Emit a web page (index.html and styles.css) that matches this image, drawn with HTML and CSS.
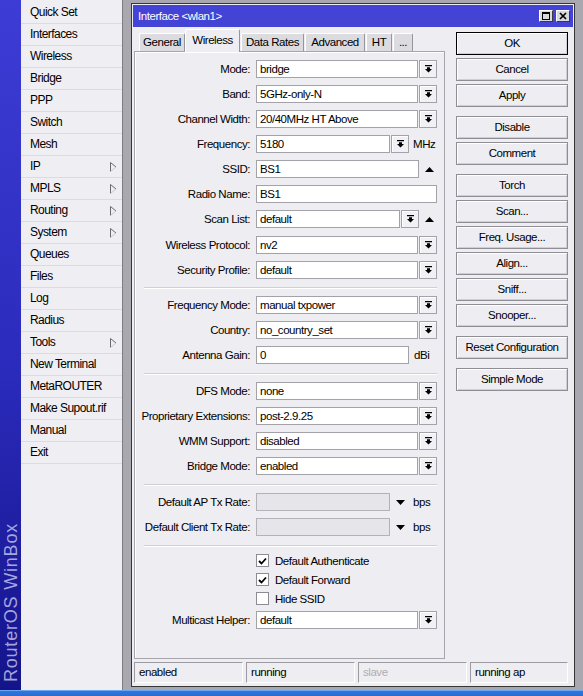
FILE: index.html
```html
<!DOCTYPE html>
<html>
<head>
<meta charset="utf-8">
<title>WinBox - Interface wlan1</title>
<link rel="stylesheet" href="styles.css">
</head>
<body>
<div class="screen">
  <div class="main">
    <div class="brand"><span class="brand-text">RouterOS WinBox</span></div>
    <ul class="menu">
      <li class="menu-item">Quick Set</li>
      <li class="menu-item">Interfaces</li>
      <li class="menu-item">Wireless</li>
      <li class="menu-item">Bridge</li>
      <li class="menu-item">PPP</li>
      <li class="menu-item">Switch</li>
      <li class="menu-item">Mesh</li>
      <li class="menu-item">IP<svg class="sub-arrow" width="7" height="10" viewBox="0 0 7 10"><path d="M0.5 0.5V9.5M0.5 0.5L6 5" stroke="#6a6a70" fill="none"/><path d="M6 5L0.5 9.5" stroke="#c9c8ce" fill="none"/></svg></li>
      <li class="menu-item">MPLS<svg class="sub-arrow" width="7" height="10" viewBox="0 0 7 10"><path d="M0.5 0.5V9.5M0.5 0.5L6 5" stroke="#6a6a70" fill="none"/><path d="M6 5L0.5 9.5" stroke="#c9c8ce" fill="none"/></svg></li>
      <li class="menu-item">Routing<svg class="sub-arrow" width="7" height="10" viewBox="0 0 7 10"><path d="M0.5 0.5V9.5M0.5 0.5L6 5" stroke="#6a6a70" fill="none"/><path d="M6 5L0.5 9.5" stroke="#c9c8ce" fill="none"/></svg></li>
      <li class="menu-item">System<svg class="sub-arrow" width="7" height="10" viewBox="0 0 7 10"><path d="M0.5 0.5V9.5M0.5 0.5L6 5" stroke="#6a6a70" fill="none"/><path d="M6 5L0.5 9.5" stroke="#c9c8ce" fill="none"/></svg></li>
      <li class="menu-item">Queues</li>
      <li class="menu-item">Files</li>
      <li class="menu-item">Log</li>
      <li class="menu-item">Radius</li>
      <li class="menu-item">Tools<svg class="sub-arrow" width="7" height="10" viewBox="0 0 7 10"><path d="M0.5 0.5V9.5M0.5 0.5L6 5" stroke="#6a6a70" fill="none"/><path d="M6 5L0.5 9.5" stroke="#c9c8ce" fill="none"/></svg></li>
      <li class="menu-item">New Terminal</li>
      <li class="menu-item">MetaROUTER</li>
      <li class="menu-item">Make Supout.rif</li>
      <li class="menu-item">Manual</li>
      <li class="menu-item">Exit</li>
    </ul>
    <div class="desk">
      <div class="window">
        <div class="titlebar">
          <span class="title">Interface &lt;wlan1&gt;</span>
          <div class="tb-btns">
            <span class="tb-btn"><svg width="8" height="8" viewBox="0 0 8 8"><rect x="0.5" y="0.5" width="7" height="7" fill="none" stroke="#000"/><rect x="0" y="0" width="8" height="2" fill="#000"/></svg></span>
            <span class="tb-btn"><svg width="8" height="8" viewBox="0 0 8 8"><path d="M1 1L7 7M7 1L1 7" stroke="#000" stroke-width="1.7"/></svg></span>
          </div>
        </div>
        <div class="win-body">
          <div class="win-content">
            <div class="tabs-col">
              <div class="tabs">
                <span class="tab tab-general">General</span>
                <span class="tab tab-wireless selected">Wireless</span>
                <span class="tab tab-rates">Data Rates</span>
                <span class="tab tab-adv">Advanced</span>
                <span class="tab tab-ht">HT</span>
                <span class="tab tab-more">...</span>
              </div>
              <div class="panel">
                <div class="row"><span class="label">Mode:</span><span class="field w-select">bridge</span><span class="drop"><svg width="7" height="8" viewBox="0 0 7 8"><path d="M0 0h7v1.2H0z M2 2.2h3v1.8h2L3.5 7.5 0 4h2z"/></svg></span></div>
                <div class="row"><span class="label">Band:</span><span class="field w-select">5GHz-only-N</span><span class="drop"><svg width="7" height="8" viewBox="0 0 7 8"><path d="M0 0h7v1.2H0z M2 2.2h3v1.8h2L3.5 7.5 0 4h2z"/></svg></span></div>
                <div class="row"><span class="label">Channel Width:</span><span class="field w-select">20/40MHz HT Above</span><span class="drop"><svg width="7" height="8" viewBox="0 0 7 8"><path d="M0 0h7v1.2H0z M2 2.2h3v1.8h2L3.5 7.5 0 4h2z"/></svg></span></div>
                <div class="row"><span class="label">Frequency:</span><span class="field w-freq">5180</span><span class="drop"><svg width="7" height="8" viewBox="0 0 7 8"><path d="M0 0h7v1.2H0z M2 2.2h3v1.8h2L3.5 7.5 0 4h2z"/></svg></span><span class="unit">MHz</span></div>
                <div class="row"><span class="label">SSID:</span><span class="field w-ssid">BS1</span><svg class="up" width="9" height="5" viewBox="0 0 9 5"><path d="M0 5L4.5 0L9 5z"/></svg></div>
                <div class="row"><span class="label">Radio Name:</span><span class="field w-full">BS1</span></div>
                <div class="row row-loose"><span class="label">Scan List:</span><span class="field w-scan">default</span><span class="drop"><svg width="7" height="8" viewBox="0 0 7 8"><path d="M0 0h7v1.2H0z M2 2.2h3v1.8h2L3.5 7.5 0 4h2z"/></svg></span><svg class="up" width="9" height="5" viewBox="0 0 9 5"><path d="M0 5L4.5 0L9 5z"/></svg></div>
                <div class="row"><span class="label">Wireless Protocol:</span><span class="field w-select">nv2</span><span class="drop"><svg width="7" height="8" viewBox="0 0 7 8"><path d="M0 0h7v1.2H0z M2 2.2h3v1.8h2L3.5 7.5 0 4h2z"/></svg></span></div>
                <div class="row"><span class="label">Security Profile:</span><span class="field w-select">default</span><span class="drop"><svg width="7" height="8" viewBox="0 0 7 8"><path d="M0 0h7v1.2H0z M2 2.2h3v1.8h2L3.5 7.5 0 4h2z"/></svg></span></div>
                <div class="sep sep-tight"></div>
                <div class="row"><span class="label">Frequency Mode:</span><span class="field w-select">manual txpower</span><span class="drop"><svg width="7" height="8" viewBox="0 0 7 8"><path d="M0 0h7v1.2H0z M2 2.2h3v1.8h2L3.5 7.5 0 4h2z"/></svg></span></div>
                <div class="row"><span class="label">Country:</span><span class="field w-select">no_country_set</span><span class="drop"><svg width="7" height="8" viewBox="0 0 7 8"><path d="M0 0h7v1.2H0z M2 2.2h3v1.8h2L3.5 7.5 0 4h2z"/></svg></span></div>
                <div class="row"><span class="label">Antenna Gain:</span><span class="field w-gain">0</span><span class="unit unit-gain">dBi</span></div>
                <div class="sep"></div>
                <div class="row"><span class="label">DFS Mode:</span><span class="field w-select">none</span><span class="drop"><svg width="7" height="8" viewBox="0 0 7 8"><path d="M0 0h7v1.2H0z M2 2.2h3v1.8h2L3.5 7.5 0 4h2z"/></svg></span></div>
                <div class="row"><span class="label">Proprietary Extensions:</span><span class="field w-select">post-2.9.25</span><span class="drop"><svg width="7" height="8" viewBox="0 0 7 8"><path d="M0 0h7v1.2H0z M2 2.2h3v1.8h2L3.5 7.5 0 4h2z"/></svg></span></div>
                <div class="row"><span class="label">WMM Support:</span><span class="field w-select">disabled</span><span class="drop"><svg width="7" height="8" viewBox="0 0 7 8"><path d="M0 0h7v1.2H0z M2 2.2h3v1.8h2L3.5 7.5 0 4h2z"/></svg></span></div>
                <div class="row"><span class="label">Bridge Mode:</span><span class="field w-select">enabled</span><span class="drop"><svg width="7" height="8" viewBox="0 0 7 8"><path d="M0 0h7v1.2H0z M2 2.2h3v1.8h2L3.5 7.5 0 4h2z"/></svg></span></div>
                <div class="sep"></div>
                <div class="row"><span class="label">Default AP Tx Rate:</span><span class="field disabled w-rate"></span><svg class="down" width="9" height="5" viewBox="0 0 9 5"><path d="M0 0H9L4.5 5z"/></svg><span class="unit unit-bps">bps</span></div>
                <div class="row"><span class="label">Default Client Tx Rate:</span><span class="field disabled w-rate"></span><svg class="down" width="9" height="5" viewBox="0 0 9 5"><path d="M0 0H9L4.5 5z"/></svg><span class="unit unit-bps">bps</span></div>
                <div class="sep"></div>
                <div class="check-row"><span class="checkbox"><svg width="9" height="8" viewBox="0 0 9 8"><path d="M1 4L3.5 6.5L8 1.5" fill="none" stroke="#000" stroke-width="1.8"/></svg></span>Default Authenticate</div>
                <div class="check-row"><span class="checkbox"><svg width="9" height="8" viewBox="0 0 9 8"><path d="M1 4L3.5 6.5L8 1.5" fill="none" stroke="#000" stroke-width="1.8"/></svg></span>Default Forward</div>
                <div class="check-row"><span class="checkbox"></span>Hide SSID</div>
                <div class="row"><span class="label">Multicast Helper:</span><span class="field w-select">default</span><span class="drop"><svg width="7" height="8" viewBox="0 0 7 8"><path d="M0 0h7v1.2H0z M2 2.2h3v1.8h2L3.5 7.5 0 4h2z"/></svg></span></div>
              </div>
            </div>
            <div class="buttons">
              <div class="btn-group">
                <span class="btn btn-default">OK</span>
                <span class="btn">Cancel</span>
                <span class="btn">Apply</span>
              </div>
              <div class="btn-group">
                <span class="btn">Disable</span>
                <span class="btn">Comment</span>
              </div>
              <div class="btn-group">
                <span class="btn">Torch</span>
                <span class="btn">Scan...</span>
                <span class="btn">Freq. Usage...</span>
                <span class="btn">Align...</span>
                <span class="btn">Sniff...</span>
                <span class="btn">Snooper...</span>
              </div>
              <div class="btn-group">
                <span class="btn">Reset Configuration</span>
              </div>
              <div class="btn-group">
                <span class="btn">Simple Mode</span>
              </div>
            </div>
          </div>
          <div class="status">
            <span class="cell">enabled</span>
            <span class="cell">running</span>
            <span class="cell cell-dim">slave</span>
            <span class="cell cell-last">running ap</span>
          </div>
        </div>
      </div>
    </div>
  </div>
  <div class="taskbar"></div>
</div>
</body>
</html>
```

FILE: styles.css
```css
* { box-sizing: border-box; }

body {
  margin: 0;
  width: 583px;
  height: 696px;
  overflow: hidden;
  font-family: "Liberation Sans", Arial, sans-serif;
  font-size: 11.5px;
  letter-spacing: -0.45px;
  color: #000;
  background: #a9a8b0;
}

.screen {
  display: flex;
  flex-direction: column;
  height: 696px;
}

.main {
  display: flex;
  height: 690px;
}

/* vertical brand strip */
.brand {
  flex: none;
  width: 21px;
  background: linear-gradient(#3d3dd6, #2a2abb 55%, #14148a);
  display: flex;
  flex-direction: column;
  justify-content: flex-end;
  align-items: center;
  padding-bottom: 8px;
  overflow: hidden;
}

.brand-text {
  writing-mode: vertical-rl;
  transform: rotate(180deg);
  font-size: 18px;
  letter-spacing: 0.8px;
  line-height: 20px;
  color: rgba(220, 220, 250, 0.72);
  white-space: nowrap;
}

/* left menu */
.menu {
  flex: none;
  width: 102px;
  margin: 0;
  padding: 2px 0 0;
  list-style: none;
  background: #efeef3;
  border-right: 1px solid #7d7c85;
}

.menu-item {
  height: 22px;
  line-height: 21px;
  padding: 0 5px 0 9px;
  border-bottom: 1px solid #dcdbe1;
  font-size: 12px;
  letter-spacing: -0.55px;
  display: flex;
  align-items: center;
  justify-content: space-between;
}

/* desktop area */
.desk {
  flex: none;
  width: 460px;
  padding: 3px 8px;
}

.window {
  width: 444px;
  height: 100%;
  border: 1px solid #363636;
  padding: 1px;
  background: #eeedf1;
  display: flex;
  flex-direction: column;
  overflow: hidden;
}

.titlebar {
  height: 22px;
  flex: none;
  background: #4343d5;
  color: #fff;
  display: flex;
  align-items: center;
  justify-content: space-between;
  padding: 0 3px 0 5px;
}

.title {
  line-height: 22px;
}

.tb-btns {
  display: flex;
  gap: 3px;
}

.tb-btn {
  width: 14px;
  height: 12px;
  background: #d9d8dd;
  border: 1px solid;
  border-color: #ffffff #3a3a3a #3a3a3a #ffffff;
  display: flex;
  align-items: center;
  justify-content: center;
}

.win-body {
  flex: 1;
  display: flex;
  flex-direction: column;
  padding: 2px 5px 2px 1px;
}

.win-content {
  flex: 1;
  display: flex;
}

.tabs-col {
  flex: none;
  width: 311px;
  display: flex;
  flex-direction: column;
}

/* tabs */
.tabs {
  display: flex;
  align-items: flex-end;
  height: 23px;
  padding-left: 5px;
}

.tab {
  flex: none;
  height: 19px;
  line-height: 17px;
  text-align: center;
  background: #dcdbe0;
  border: 1px solid;
  border-bottom: none;
  border-color: #ffffff #96959b #96959b #ffffff;
  border-radius: 2px 2px 0 0;
  margin-left: 1px;
}

.tab.selected {
  height: 23px;
  line-height: 20px;
  background: #eeedf1;
  position: relative;
  z-index: 1;
  margin-left: 0;
}

.tab-general { width: 46px; margin-left: 0; }
.tab-wireless { width: 55px; }
.tab-rates { width: 63px; }
.tab-adv { width: 60px; }
.tab-ht { width: 26px; }
.tab-more { width: 20px; }

/* tab panel */
.panel {
  flex: 1;
  margin-top: -1px;
  border: 1px solid #a6a5ab;
  box-shadow: inset 1px 1px #ffffff;
  padding-top: 8px;
  display: flex;
  flex-direction: column;
}

.row {
  flex: none;
  display: flex;
  align-items: center;
  height: 18px;
  margin-bottom: 7px;
}

.row-loose {
  margin-bottom: 8px;
}

.label {
  flex: none;
  width: 115px;
  margin-right: 6px;
  text-align: right;
  white-space: nowrap;
}

.field {
  flex: none;
  height: 18px;
  line-height: 16px;
  padding: 0 3px;
  background: #ffffff;
  border: 1px solid #a3a2a8;
  white-space: nowrap;
  overflow: hidden;
}

.field.disabled {
  background: #e6e5ea;
  border-color: #b3b2b8;
}

.w-select { width: 162px; }
.w-freq { width: 134px; }
.w-ssid { width: 163px; }
.w-scan { width: 144px; }
.w-full { width: 181px; }
.w-gain { width: 153px; }
.w-rate { width: 134px; }

.drop {
  flex: none;
  width: 18px;
  height: 18px;
  margin-left: 1px;
  border: 1px solid #a3a2a8;
  background: #f1f0f4;
  box-shadow: inset 1px 1px #ffffff;
  display: flex;
  align-items: center;
  justify-content: center;
}

.unit { margin-left: 4px; }
.unit-gain { margin-left: 5px; }
.unit-bps { margin-left: 8px; }

.up { flex: none; margin-left: 6px; }
.down { flex: none; margin-left: 6px; }

.sep {
  flex: none;
  height: 2px;
  margin: 2px 7px 7px 9px;
  border-top: 1px solid #d0cfd5;
  border-bottom: 1px solid #ffffff;
}

.sep-tight {
  margin-top: 1px;
}

.check-row {
  flex: none;
  display: flex;
  align-items: center;
  height: 13px;
  margin-bottom: 6px;
  padding-left: 121px;
  white-space: nowrap;
}

.checkbox {
  flex: none;
  width: 13px;
  height: 13px;
  margin-right: 6px;
  border: 1px solid #8d8c92;
  background: #ffffff;
  display: flex;
  align-items: center;
  justify-content: center;
}

/* right buttons */
.buttons {
  flex: none;
  width: 112px;
  margin-left: 11px;
  padding-top: 3px;
  display: flex;
  flex-direction: column;
  gap: 9px;
}

.btn-group {
  display: flex;
  flex-direction: column;
  gap: 3px;
}

.btn {
  height: 23px;
  line-height: 21px;
  text-align: center;
  background: #eeedf1;
  border: 1px solid #8f8e95;
  box-shadow: inset 1px 1px #ffffff, inset -1px -1px #cfced4;
  white-space: nowrap;
}

.btn-default {
  border-color: #000000;
}

/* status bar */
.status {
  display: flex;
  gap: 3px;
  height: 21px;
  margin-top: 3px;
}

.cell {
  flex: none;
  width: 109px;
  line-height: 19px;
  padding-left: 4px;
  border: 1px solid;
  border-color: #9c9ba1 #ffffff #ffffff #9c9ba1;
  white-space: nowrap;
}

.cell-dim { color: #aeadb3; }
.cell-last { flex: 1; }

.taskbar {
  height: 6px;
  background: linear-gradient(#6aa6f2 0, #6aa6f2 1px, #2f78dc 1px, #2a6cd0);
}
```
